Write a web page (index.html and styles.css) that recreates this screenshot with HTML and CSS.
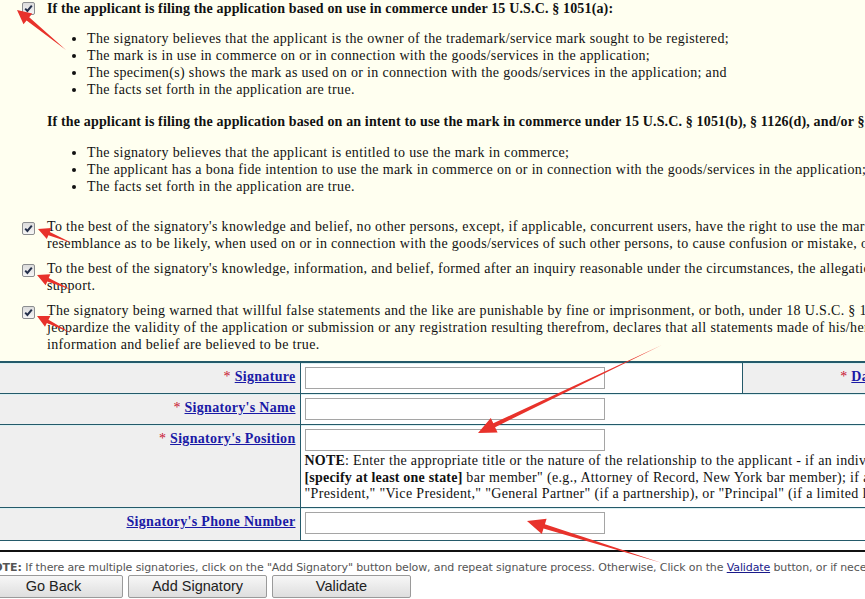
FILE: index.html
```html
<!DOCTYPE html>
<html lang="en">
<head>
    <meta charset="UTF-8">
    <meta name="viewport" content="width=device-width, initial-scale=1.0">
    <title>Signature Information</title>
    <link rel="stylesheet" href="styles.css">
</head>
<body>

    <div class="statements">
        <div class="check-row">
            <span class="checkbox"><svg width="11" height="11" viewBox="0 0 11 11"><path d="M2.2 5.6 L4.4 7.9 L8.8 2.6" /></svg></span>
            <div class="check-body">
                <p class="basis">If the applicant is filing the application based on use in commerce under 15 U.S.C. &sect; 1051(a):</p>
                <ul class="basis-list">
                    <li>The signatory believes that the applicant is the owner of the trademark/service mark sought to be registered;</li>
                    <li>The mark is in use in commerce on or in connection with the goods/services in the application;</li>
                    <li>The specimen(s) shows the mark as used on or in connection with the goods/services in the application; and</li>
                    <li>The facts set forth in the application are true.</li>
                </ul>
                <p class="basis basis-second">If the applicant is filing the application based on an intent to use the mark in commerce under 15 U.S.C. &sect; 1051(b), &sect; 1126(d), and/or &sect; 1126(e):</p>
                <ul class="basis-list list-second">
                    <li>The signatory believes that the applicant is entitled to use the mark in commerce;</li>
                    <li>The applicant has a bona fide intention to use the mark in commerce on or in connection with the goods/services in the application;</li>
                    <li>The facts set forth in the application are true.</li>
                </ul>
            </div>
        </div>

        <div class="declarations">
            <div class="check-row decl">
                <span class="checkbox"><svg width="11" height="11" viewBox="0 0 11 11"><path d="M2.2 5.6 L4.4 7.9 L8.8 2.6" /></svg></span>
                <p>To the best of the signatory's knowledge and belief, no other persons, except, if applicable, concurrent users, have the right to use the mark in commerce, either in the identical form or in such near<br>resemblance as to be likely, when used on or in connection with the goods/services of such other persons, to cause confusion or mistake, or to deceive.</p>
            </div>
            <div class="check-row decl">
                <span class="checkbox"><svg width="11" height="11" viewBox="0 0 11 11"><path d="M2.2 5.6 L4.4 7.9 L8.8 2.6" /></svg></span>
                <p>To the best of the signatory's knowledge, information, and belief, formed after an inquiry reasonable under the circumstances, the allegations and other factual contentions made above have evidentiary<br>support.</p>
            </div>
            <div class="check-row decl">
                <span class="checkbox"><svg width="11" height="11" viewBox="0 0 11 11"><path d="M2.2 5.6 L4.4 7.9 L8.8 2.6" /></svg></span>
                <p>The signatory being warned that willful false statements and the like are punishable by fine or imprisonment, or both, under 18 U.S.C. &sect; 1001, and that such willful false statements and the like may<br>jeopardize the validity of the application or submission or any registration resulting therefrom, declares that all statements made of his/her own knowledge are true and all statements made on<br>information and belief are believed to be true.</p>
            </div>
        </div>

        <table class="sig-table">
            <colgroup>
                <col class="col-label">
                <col class="col-input">
                <col class="col-date-label">
                <col class="col-date">
            </colgroup>
            <tr>
                <td class="label"><span class="req">*</span> <a href="#">Signature</a></td>
                <td class="field"><input type="text"></td>
                <td class="label"><span class="req">*</span> <a href="#">Date</a></td>
                <td class="field"><input type="text"></td>
            </tr>
            <tr>
                <td class="label"><span class="req">*</span> <a href="#">Signatory's Name</a></td>
                <td class="field" colspan="3"><input type="text"></td>
            </tr>
            <tr>
                <td class="label"><span class="req">*</span> <a href="#">Signatory's Position</a></td>
                <td class="field" colspan="3">
                    <input type="text">
                    <p class="field-note"><b>NOTE</b>: Enter the appropriate title or the nature of the relationship to the applicant - if an individual, enter "Owner"; if an attorney, enter "Attorney of Record,<br><b>[specify at least one state]</b> bar member" (e.g., Attorney of Record, New York bar member); if a corporate officer, enter the title, e.g.,<br>"President," "Vice President," "General Partner" (if a partnership), or "Principal" (if a limited liability company).</p>
                </td>
            </tr>
            <tr>
                <td class="label"><a href="#">Signatory's Phone Number</a></td>
                <td class="field" colspan="3"><input type="text"></td>
            </tr>
        </table>
    </div>

    <div class="footer">
        <hr>
        <p class="note"><b>NOTE:</b> If there are multiple signatories, click on the "Add Signatory" button below, and repeat signature process. Otherwise, Click on the <a href="#">Validate</a> button, or if necessary, click on the Go Back button to return to the previous page.</p>
        <div class="buttons">
            <button class="btn">Go Back</button>
            <button class="btn">Add Signatory</button>
            <button class="btn">Validate</button>
        </div>
    </div>

    <!-- red annotation arrows drawn over the page -->
    <svg class="marks" width="865" height="599" viewBox="0 0 865 599">
        <polygon transform="translate(-1,4)" points="67,46 30.2,13.3 33.3,9.5 18,6 24.5,20.3 27.6,16.5" />
        <polygon points="72,243 49.8,231.9 51.4,228.1 38,229 46.8,239.1 48.4,235.3" />
        <polygon points="72,290 48.7,278 50.4,274.2 37,275 45.6,285.2 47.3,281.4" />
        <polygon points="71,333 48.5,319.8 50.4,316 37,316 45,326.8 46.9,323" />
        <polygon points="662,345 495.1,427.2 497.6,432.4 478,433 490.8,418 493.3,423.2" />
        <polygon points="662,563 544.9,524.2 546.6,518.7 527,521 541.8,533.9 543.5,528.4" />
    </svg>

</body>
</html>
```

FILE: styles.css
```css
html, body {
    overflow: hidden;
}
body {
    margin: 0;
    background: #ffffff;
    font-family: "Liberation Serif", "Times New Roman", serif;
    font-size: 14px;
    line-height: 17px;
    letter-spacing: 0.34px;
    color: #111;
}
b {
    letter-spacing: 0.2px;
}
.statements {
    background: #fffff0;
}
.check-row {
    display: flex;
    gap: 12px;
    padding-left: 22px;
    white-space: nowrap;
}
.checkbox {
    flex: none;
    width: 11px;
    height: 11px;
    margin-top: 2px;
    border: 1px solid #8c8e90;
    border-radius: 2px;
    background: linear-gradient(#dcdcdc, #f6f6f6);
}
.checkbox svg {
    display: block;
}
.checkbox path {
    fill: none;
    stroke: #24304a;
    stroke-width: 2;
}
.basis {
    margin: 0;
    font-weight: bold;
    letter-spacing: 0.15px;
}
.basis-list {
    margin: 13px 0 0;
    padding-left: 40px;
}
.basis-second {
    margin-top: 15px;
}
.list-second {
    margin-top: 14px;
}
.declarations {
    margin-top: 23px;
}
.decl {
    margin-bottom: 8px;
}
.decl .checkbox {
    margin-top: 4px;
}
.decl p {
    margin: 0;
}
.sig-table {
    width: 1400px;
    table-layout: fixed;
    border-collapse: collapse;
    border-top: 2px solid #245a6a;
}
.col-label {
    width: 300px;
}
.col-input {
    width: 442px;
}
.col-date-label {
    width: 143px;
}
.sig-table td {
    border: 1px solid #245a6a;
    border-top: 0;
    padding: 4px;
    vertical-align: top;
    box-shadow: inset 0 1px 0 #dcf0f2;
}
.sig-table td:first-child {
    border-left: 0;
}
.label {
    background: #efefef;
    text-align: right;
    font-weight: bold;
    letter-spacing: 0.3px;
    padding-top: 5px !important;
}
.label a {
    color: #1a1aa6;
}
.req {
    color: #c8102e;
    font-weight: normal;
}
.field {
    background: #ffffff;
}
.field input {
    display: block;
    width: 300px;
    height: 22px;
    box-sizing: border-box;
    border: 1px solid #a5a5a5;
    margin: 0;
    padding: 1px 3px;
    font-size: 13px;
}
.sig-table tr:last-child td {
    padding-bottom: 6px;
}
.field-note {
    margin: 2px 0 0;
    line-height: 16.5px;
    white-space: nowrap;
}
.footer {
    margin-left: -16px;
    white-space: nowrap;
}
.footer hr {
    border: 0;
    border-top: 2px solid #111;
    margin: 9px 0 0 16px;
}
.note {
    margin: 9px 0 0;
    font-family: Tahoma, "DejaVu Sans", sans-serif;
    font-size: 11px;
    line-height: 14px;
    letter-spacing: -0.12px;
    color: #555;
}
.note b {
    letter-spacing: 0;
}
.note a {
    color: #1a1a8a;
}
.buttons {
    display: flex;
    gap: 5px;
    margin-top: 0;
}
.btn {
    width: 139px;
    height: 23px;
    padding: 0;
    font-family: "Liberation Sans", Arial, sans-serif;
    font-size: 14.5px;
    letter-spacing: 0;
    color: #222;
    border: 1px solid #9a9a9a;
    border-radius: 2px;
    background: linear-gradient(#f7f7f7, #dedede);
}
.marks {
    position: absolute;
    left: 0;
    top: 0;
    pointer-events: none;
}
.marks polygon {
    fill: #e8322b;
}
```
